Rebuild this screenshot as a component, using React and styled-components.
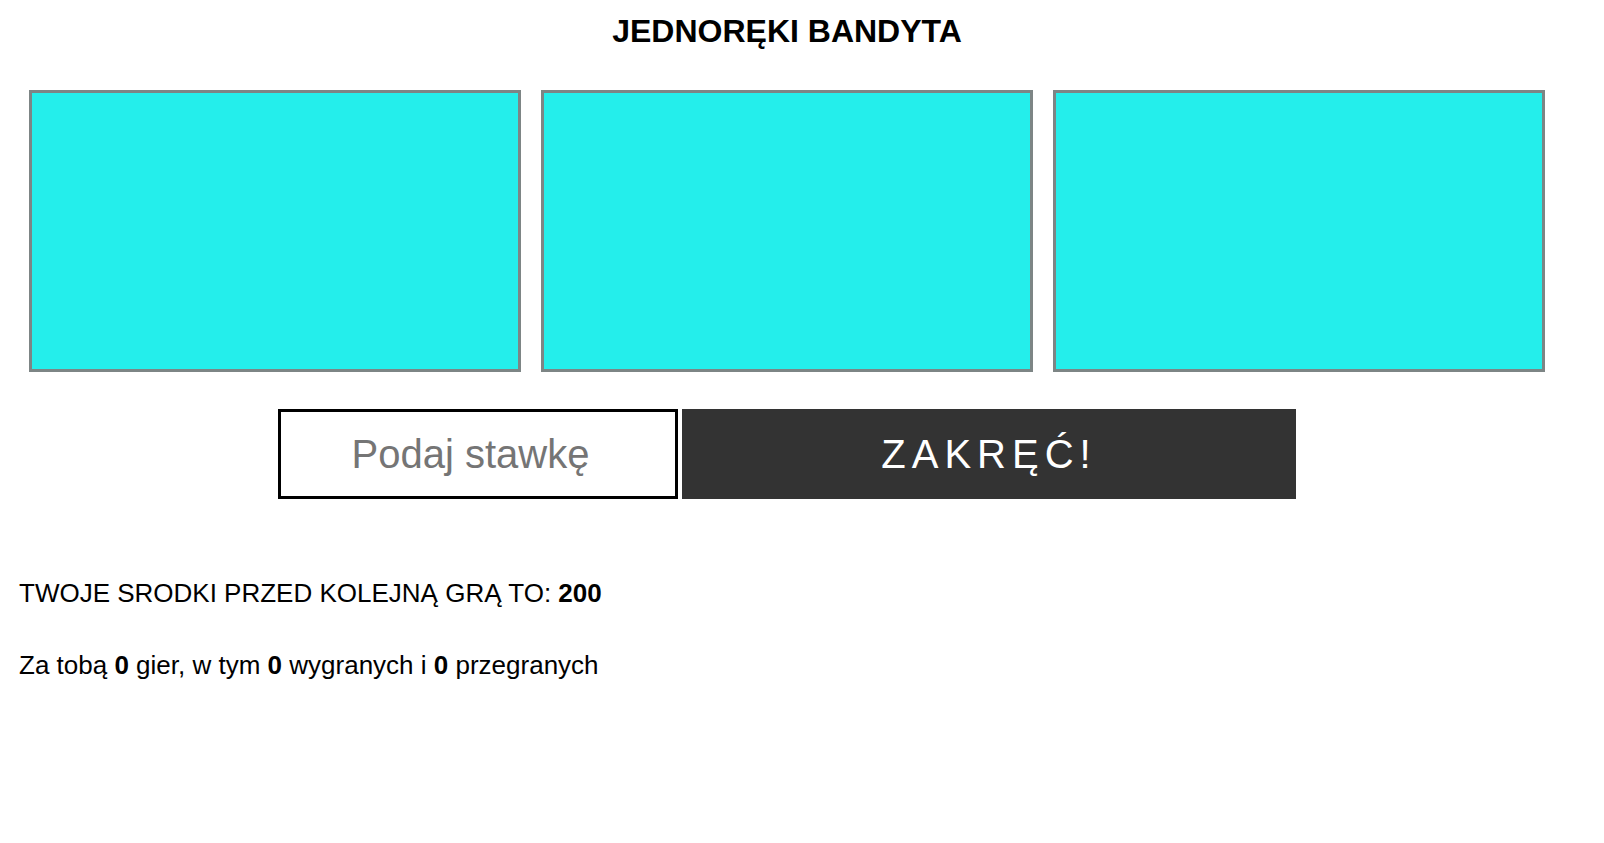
import React, { useState } from "react";
import styled, { createGlobalStyle } from "styled-components";

const GlobalStyle = createGlobalStyle`
    html, body {
        margin: 0;
        padding: 0;
        background: #fff;
        font-family: "Liberation Sans", Arial, sans-serif;
        color: #000;
    }
`;

const Wrapper = styled.div`
    width: 1516px;
    margin-left: 29px;
`;

const Title = styled.h1`
    margin: 0;
    padding-top: 13px;
    font-size: 32px;
    line-height: 36px;
    font-weight: bold;
    text-align: center;
`;

const Reels = styled.div`
    display: flex;
    gap: 20px;
    margin-top: 41px;
`;

const Reel = styled.div`
    box-sizing: border-box;
    width: 492px;
    height: 282px;
    background: #24eeeb;
    border: 3px solid #7d8585;
`;

const Controls = styled.form`
    display: flex;
    justify-content: center;
    gap: 4px;
    margin-top: 37px;
`;

const BetInput = styled.input`
    box-sizing: border-box;
    width: 400px;
    height: 90px;
    border: 3px solid #000;
    padding: 0;
    font-family: "Liberation Sans", Arial, sans-serif;
    font-size: 40px;
    text-align: center;
    outline: none;

    &::placeholder {
        color: #757575;
    }
`;

const SpinButton = styled.button`
    box-sizing: border-box;
    width: 614px;
    height: 90px;
    border: none;
    background: #333;
    color: #fff;
    font-family: "Liberation Sans", Arial, sans-serif;
    font-size: 40px;
    letter-spacing: 6px;
    cursor: pointer;
`;

const Stats = styled.div`
    padding-left: 19px;
    margin-top: 80px;
`;

const Line = styled.p`
    margin: 0 0 43px;
    font-size: 26px;
    line-height: 29px;
`;

function App() {
    const [bet, setBet] = useState("");
    const money = 200;
    const games = 0;
    const wins = 0;
    const losses = 0;

    return (
        <>
            <GlobalStyle />
            <Wrapper>
                <Title>JEDNORĘKI BANDYTA</Title>
                <Reels>
                    <Reel />
                    <Reel />
                    <Reel />
                </Reels>
                <Controls onSubmit={e => e.preventDefault()}>
                    <BetInput
                        type="number"
                        placeholder="Podaj stawkę"
                        value={bet}
                        onChange={e => setBet(e.target.value)}
                    />
                    <SpinButton type="submit">ZAKRĘĆ!</SpinButton>
                </Controls>
            </Wrapper>
            <Stats>
                <Line>TWOJE SRODKI PRZED KOLEJNĄ GRĄ TO: <b>{money}</b></Line>
                <Line>
                    Za tobą <b>{games}</b> gier, w tym <b>{wins}</b> wygranych i <b>{losses}</b> przegranych
                </Line>
            </Stats>
        </>
    );
}

export default App;
